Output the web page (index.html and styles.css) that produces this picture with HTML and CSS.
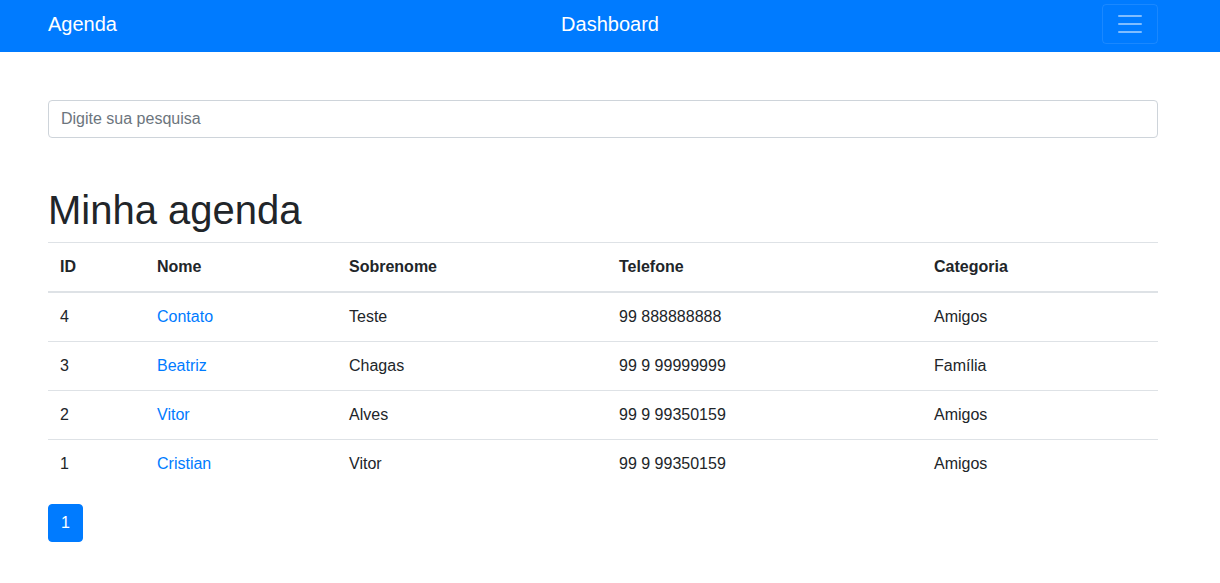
FILE: index.html
```html
<!DOCTYPE html>
<html lang="pt-BR">
<head>
<meta charset="utf-8">
<title>Agenda</title>
<link rel="stylesheet" href="styles.css">
</head>
<body>
<nav class="navbar">
  <div class="navbar-inner">
    <a class="brand" href="#">Agenda</a>
    <button class="toggler" type="button" aria-label="Menu">
      <svg width="30" height="30" viewBox="0 0 30 30"><path stroke="rgba(255,255,255,0.5)" stroke-linecap="round" stroke-miterlimit="10" stroke-width="2" d="M4 7h22M4 15h22M4 23h22"/></svg>
    </button>
  </div>
  <span class="nav-title">Dashboard</span>
</nav>
<main class="container">
  <input class="search" type="text" placeholder="Digite sua pesquisa">
  <h1 class="title">Minha agenda</h1>
  <table class="table">
    <colgroup>
      <col class="c-id"><col class="c-nome"><col class="c-sob"><col class="c-tel"><col class="c-cat">
    </colgroup>
    <thead>
      <tr><th>ID</th><th>Nome</th><th>Sobrenome</th><th>Telefone</th><th>Categoria</th></tr>
    </thead>
    <tbody>
      <tr><td>4</td><td><a href="#">Contato</a></td><td>Teste</td><td>99 888888888</td><td>Amigos</td></tr>
      <tr><td>3</td><td><a href="#">Beatriz</a></td><td>Chagas</td><td>99 9 99999999</td><td>Família</td></tr>
      <tr><td>2</td><td><a href="#">Vitor</a></td><td>Alves</td><td>99 9 99350159</td><td>Amigos</td></tr>
      <tr><td>1</td><td><a href="#">Cristian</a></td><td>Vitor</td><td>99 9 99350159</td><td>Amigos</td></tr>
    </tbody>
  </table>
  <ul class="pagination">
    <li><a class="page-link active" href="#">1</a></li>
  </ul>
</main>
</body>
</html>
```
FILE: styles.css
```css
* { box-sizing: border-box; }
html, body {
  margin: 0;
  padding: 0;
  background: #fff;
  font-family: "Liberation Sans", Arial, sans-serif;
  font-size: 16px;
  line-height: 1.5;
  color: #212529;
}
.navbar {
  background: #007bff;
  height: 52px;
  position: relative;
}
.navbar-inner {
  width: 1110px;
  margin: 0 0 0 48px;
  height: 52px;
  padding: 4px 0 8px;
  display: flex;
  align-items: center;
  justify-content: space-between;
}
.brand {
  color: #fff;
  text-decoration: none;
  font-size: 20px;
  line-height: 30px;
}
.nav-title {
  color: #fff;
  font-size: 20px;
  position: absolute;
  left: 0;
  right: 0;
  top: 4px;
  height: 40px;
  line-height: 40px;
  text-align: center;
  pointer-events: none;
}
.toggler {
  width: 56px;
  height: 40px;
  padding: 4px 12px;
  background: transparent;
  border: 1px solid rgba(255,255,255,0.1);
  border-radius: 4px;
  display: flex;
  align-items: center;
  justify-content: center;
}
.toggler svg { display: block; }
.container {
  width: 1110px;
  margin: 0 0 0 48px;
  padding-top: 48px;
}
.search {
  display: block;
  width: 100%;
  height: 38px;
  padding: 6px 12px;
  font-family: inherit;
  font-size: 16px;
  line-height: 24px;
  color: #495057;
  border: 1px solid #ced4da;
  border-radius: 4px;
  outline: none;
}
.search::placeholder { color: #6c757d; opacity: 1; }
.title {
  margin: 48px 0 8px;
  font-size: 40px;
  font-weight: 500;
  line-height: 48px;
}
.table {
  width: 100%;
  border-collapse: collapse;
  margin-bottom: 16px;
  table-layout: fixed;
}
.c-id { width: 97px; }
.c-nome { width: 192px; }
.c-sob { width: 270px; }
.c-tel { width: 315px; }
.c-cat { width: 236px; }
.table th, .table td {
  padding: 12px;
  text-align: left;
  vertical-align: top;
  border-top: 1px solid #dee2e6;
  line-height: 24px;
}
.table th { font-weight: 700; }
.table thead th { border-bottom: 2px solid #dee2e6; }
.table a { color: #007bff; text-decoration: none; }
.pagination {
  list-style: none;
  margin: 0;
  padding: 0;
  display: flex;
}
.page-link {
  display: block;
  padding: 8px 12px;
  line-height: 20px;
  border: 1px solid #007bff;
  border-radius: 4px;
  text-decoration: none;
}
.page-link.active {
  background: #007bff;
  color: #fff;
}
```
